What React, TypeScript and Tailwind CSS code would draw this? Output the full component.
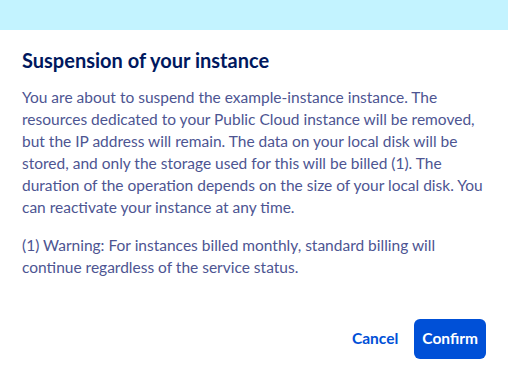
export default function App() {
  return (
    <div className="flex h-[381px] w-[508px] flex-col bg-white font-['Lato',sans-serif]">
      <div className="h-[30px] bg-[#c3f3ff]" />
      <div className="flex flex-1 flex-col px-[22px] pt-[17px]">
        <h2 className="text-[20px] font-bold leading-[26px] text-[#00185e]">
          Suspension of your instance
        </h2>
        <p className="mt-[13px] text-[15.5px] leading-[22px] text-[#4d5592]">
          You are about to suspend the example-instance instance. The resources dedicated to your
          Public Cloud instance will be removed, but the IP address will remain. The data on your
          local disk will be stored, and only the storage used for this will be billed (1). The
          duration of the operation depends on the size of your local disk. You can reactivate your
          instance at any time.
        </p>
        <p className="mt-[16px] text-[15.5px] leading-[22px] text-[#4d5592]">
          (1) Warning: For instances billed monthly, standard billing will continue regardless of
          the service status.
        </p>
        <div className="mt-[41px] flex items-center justify-end gap-[16px]">
          <button className="text-[15.5px] font-bold text-[#0050d7]">Cancel</button>
          <button className="h-[40px] rounded-[6px] bg-[#0050d7] px-[8px] text-[15.5px] font-bold text-white">
            Confirm
          </button>
        </div>
      </div>
    </div>
  );
}
